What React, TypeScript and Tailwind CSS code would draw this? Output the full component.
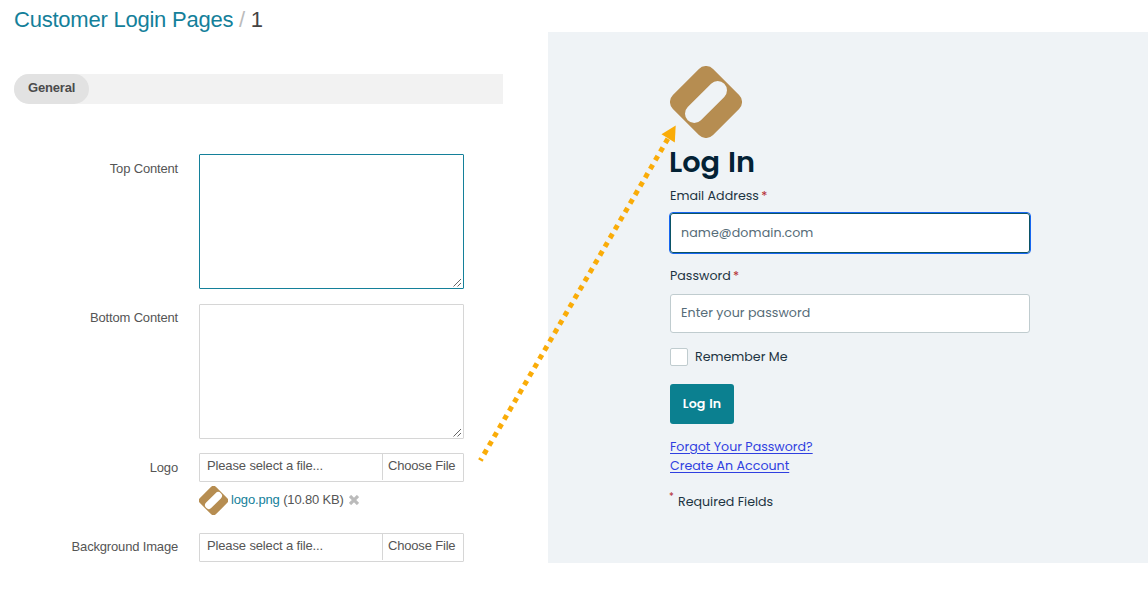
import React from 'react';

function Logo({ className, hole }: { className: string; hole: string }) {
  return (
    <svg viewBox="0 0 72 72" className={className} aria-hidden="true">
      <rect x="7.6" y="7.6" width="56.8" height="56.8" rx="10" fill="#b68d51" transform="rotate(45 36 36)" />
      <line x1="24.3" y1="47.7" x2="47.7" y2="24.3" stroke={hole} strokeWidth="18.6" strokeLinecap="round" />
    </svg>
  );
}

function Row({ label, children, className }: { label: string; children: React.ReactNode; className: string }) {
  return (
    <div className={`flex ${className}`}>
      <div className="w-[178px] shrink-0 pt-[5px] text-right leading-5 tracking-[-0.17px]">{label}</div>
      <div className="ml-[21px] w-[265px]">{children}</div>
    </div>
  );
}

function TextArea({ active }: { active?: boolean }) {
  return (
    <div
      className={`flex h-[135px] items-end justify-end rounded-[1px] border bg-white ${
        active ? 'border-[#14809a]' : 'border-[#d6d6d6]'
      }`}
    >
      <svg width="10" height="10" viewBox="0 0 10 10" stroke="#555" strokeWidth="0.9" aria-hidden="true">
        <path d="M0.5 8.5L8 1M4.5 8.5L8 5" />
      </svg>
    </div>
  );
}

function FileInput() {
  return (
    <div className="flex h-[29px] rounded-[1px] border border-[#d6d6d6] bg-white leading-[23px]">
      <div className="w-[182px] pl-[7px] tracking-[-0.14px]">Please select a file...</div>
      <div className="h-[26px] border-l border-[#d6d6d6] pl-[5px] tracking-[-0.18px]">Choose File</div>
    </div>
  );
}

function Required() {
  return <span className="-ml-px text-[#b3262c]">*</span>;
}

export default function App() {
  return (
    <div className="relative flex h-[598px] w-[1148px] overflow-hidden bg-white">
      <div className="w-[548px] shrink-0 font-['Liberation_Sans',Arial,sans-serif] text-[13px] text-[#555]">
        <h1 className="h-[74px] pt-[7px] pl-[14px] text-[22px] leading-[26px] tracking-[-0.23px] text-[#14809a]">
          Customer Login Pages <span className="text-[#bbb]">/</span> <span className="text-[#444]">1</span>
        </h1>
        <div className="ml-[14px] flex h-[30px] w-[489px] rounded-l-full bg-[#f2f2f2]">
          <div className="h-[30px] w-[75px] rounded-full bg-[#e2e2e2] pl-[14px] font-bold leading-[28px] tracking-[-0.17px] text-[#4b4b4b]">
            General
          </div>
        </div>
        <Row label="Top Content" className="mt-[50px]">
          <TextArea active />
        </Row>
        <Row label="Bottom Content" className="mt-[15px] [&>div:first-child]:pt-1">
          <TextArea />
        </Row>
        <Row label="Logo" className="mt-[14px]">
          <FileInput />
          <div className="mt-[4px] flex h-[29px] items-center">
            <Logo className="size-[29px]" hole="#fff" />
            <span className="ml-[3px] whitespace-pre pb-px tracking-[-0.15px]">
              <span className="text-[#14809a]">logo.png</span> (10.80 KB)
            </span>
            <svg width="10" height="10" viewBox="0 0 10 10" className="mb-[2px] ml-[5px]" stroke="#bbb" strokeWidth="3.2" aria-hidden="true">
              <path d="M1 1L9 9M9 1L1 9" />
            </svg>
          </div>
        </Row>
        <Row label="Background Image" className="mt-[18px] [&>div:first-child]:pt-1">
          <FileInput />
        </Row>
      </div>

      <div className="mt-8 h-[531px] w-[600px] bg-[#eff3f6] pt-[34px] pl-[122px] font-[Poppins,Inter,sans-serif] text-[12.64px] text-[#1d3442]">
        <Logo className="size-[72px]" hole="#eff3f6" />
        <h2 className="-ml-px mt-[6px] h-[36px] text-[28.8px] font-semibold leading-[37px] text-[#032235] [word-spacing:1px]">Log In</h2>
        <div className="mt-[6px] h-5 leading-5">
          Email Address <Required />
        </div>
        <div className="mt-[6px] -ml-px h-[42px] w-[362px] rounded-[4px] border border-[#1766f0] bg-white">
          <div className="h-[40px] rounded-[3px] border border-[#0b5366] pl-[10px] leading-[37px] tracking-[0.1px] text-[#566c78]">
            name@domain.com
          </div>
        </div>
        <div className="mt-[12px] h-5 leading-5">
          Password <Required />
        </div>
        <div className="mt-[8px] h-[39px] w-[360px] rounded-[3px] border border-[#c0cccf] bg-white pl-[10px] leading-[36px] tracking-[0.05px] text-[#566c78]">
          Enter your password
        </div>
        <div className="mt-[14px] flex h-5 items-center">
          <div className="size-[18px] rounded-[2px] border border-[#c0cccf] bg-white" />
          <span className="ml-[7px]">Remember Me</span>
        </div>
        <div className="mt-[17px] h-[40px] w-[64px] rounded-[3px] bg-[#0b8090] text-center font-semibold leading-[39px] text-white [word-spacing:1px]">
          Log In
        </div>
        <div className="mt-[13px] flex flex-col items-start leading-[19px] text-[#2f3fe0]">
          <a className="underline underline-offset-2">Forgot Your Password?</a>
          <a className="underline underline-offset-2">Create An Account</a>
        </div>
        <div className="mt-[17px] flex h-5 leading-5">
          <span className="mt-[-5px] w-[8px] text-[10px]">
            <Required />
          </span>
          <span>Required Fields</span>
        </div>
      </div>

      <svg className="pointer-events-none absolute inset-0" width="1148" height="598" aria-hidden="true">
        <line x1="480.3" y1="460.6" x2="668.6" y2="137.5" stroke="#faac08" strokeWidth="5" strokeDasharray="5 5" strokeDashoffset="2.5" />
        <polygon points="675.7,125.6 661.5,134.3 674.8,142.5" fill="#faac08" />
      </svg>
    </div>
  );
}
